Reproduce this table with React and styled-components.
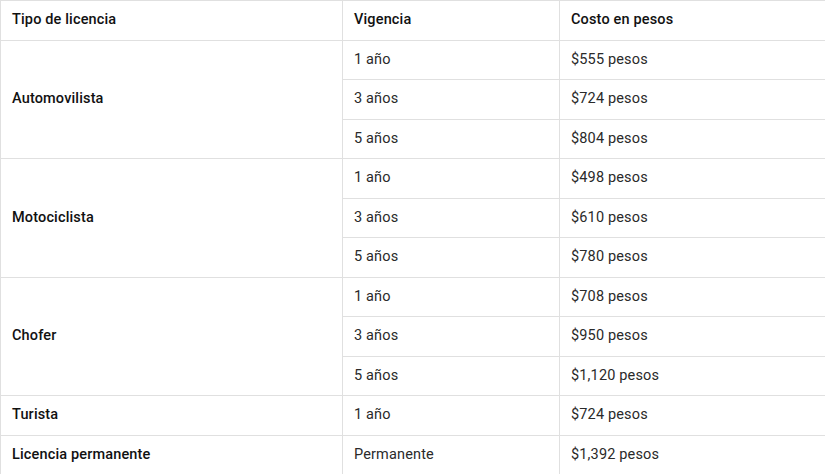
import styled, { createGlobalStyle } from 'styled-components'

const GlobalStyle = createGlobalStyle`
  html, body {
    margin: 0;
    padding: 0;
    background: #fff;
  }
  body {
    font-family: Roboto, "Noto Sans", "Liberation Sans", sans-serif;
    color: #1e1e1e;
  }
`

// table parts
const Table = styled.table`
  width: 825px;
  border-collapse: collapse;
  table-layout: fixed;
  font-size: 14.5px;
  letter-spacing: 0.15px;
  line-height: 18px;
`

const Col = styled.col`
  width: ${(p) => p.$w}px;
`

const Row = styled.tr`
  height: 39.5px;
`

const HeadCell = styled.th`
  border: 1.5px solid #e0e0e0;
  padding: 0 11px;
  text-align: left;
  font-weight: 500;
  vertical-align: middle;
  color: #111;
`

const Cell = styled.td`
  border: 1.5px solid #e0e0e0;
  padding: 0 11px;
  vertical-align: middle;
  font-weight: ${(p) => (p.$bold ? 500 : 400)};
  color: ${(p) => (p.$bold ? '#111' : '#2a2a2a')};
`

const data = [
  { tipo: 'Automovilista', items: [['1 año', '$555 pesos'], ['3 años', '$724 pesos'], ['5 años', '$804 pesos']] },
  { tipo: 'Motociclista', items: [['1 año', '$498 pesos'], ['3 años', '$610 pesos'], ['5 años', '$780 pesos']] },
  { tipo: 'Chofer', items: [['1 año', '$708 pesos'], ['3 años', '$950 pesos'], ['5 años', '$1,120 pesos']] },
  { tipo: 'Turista', items: [['1 año', '$724 pesos']] },
  { tipo: 'Licencia permanente', items: [['Permanente', '$1,392 pesos']] },
]

export default function App() {
  return (
    <>
      <GlobalStyle />
      <Table>
        <colgroup>
          <Col $w={342} />
          <Col $w={217} />
          <Col $w={266} />
        </colgroup>
        <thead>
          <Row>
            <HeadCell>Tipo de licencia</HeadCell>
            <HeadCell>Vigencia</HeadCell>
            <HeadCell>Costo en pesos</HeadCell>
          </Row>
        </thead>
        <tbody>
          {data.map((group) =>
            group.items.map(([vigencia, costo], i) => (
              <Row key={group.tipo + i}>
                {i === 0 && (
                  <Cell $bold rowSpan={group.items.length}>
                    {group.tipo}
                  </Cell>
                )}
                <Cell>{vigencia}</Cell>
                <Cell>{costo}</Cell>
              </Row>
            ))
          )}
        </tbody>
      </Table>
    </>
  )
}
